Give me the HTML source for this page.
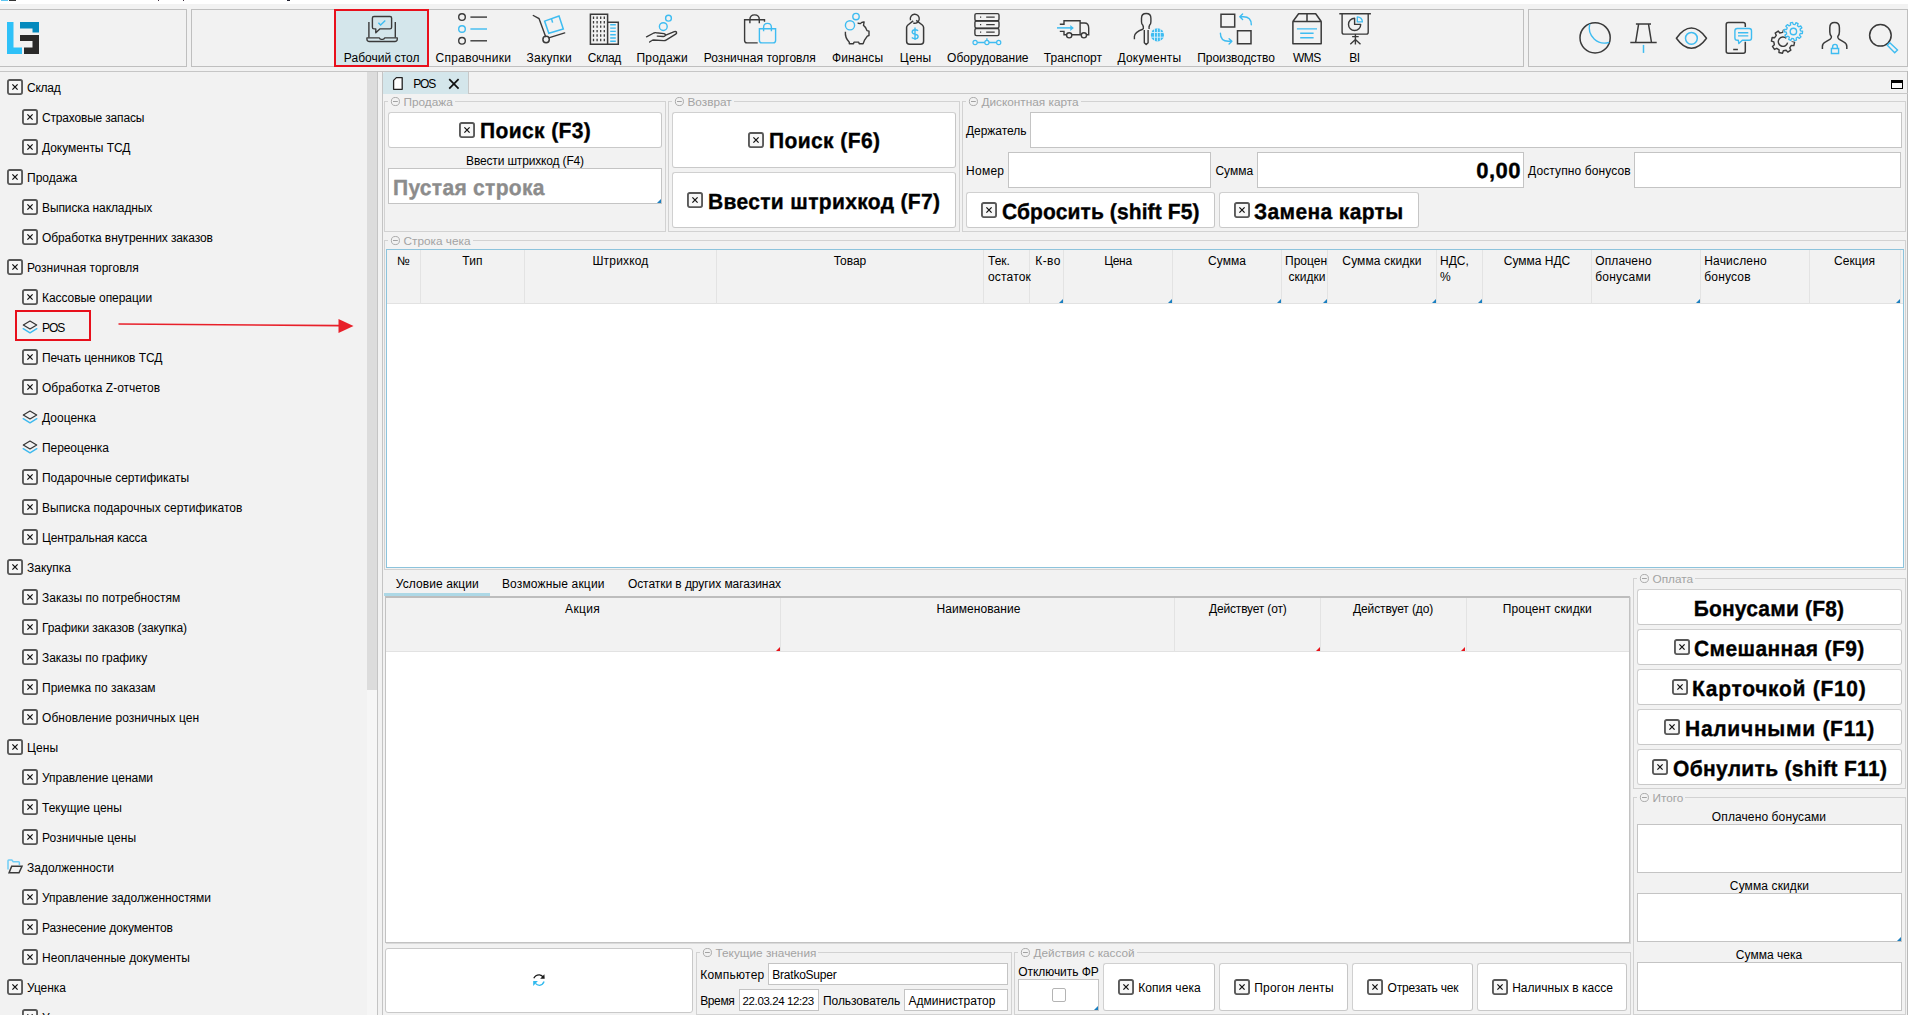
<!DOCTYPE html>
<html><head><meta charset="utf-8">
<style>
*{box-sizing:border-box;margin:0;padding:0}
html,body{width:1908px;height:1015px;overflow:hidden;background:#f2f2f2;font-family:"Liberation Sans",sans-serif;font-size:12px;color:#000}
.a{position:absolute}
.t{position:absolute;white-space:nowrap;line-height:14px;height:14px}
.c{text-align:center}
.pn{position:absolute;border:1px solid #bfbfbf}
.hl{position:absolute;height:1px;background:#c6c6c6}
.vl{position:absolute;width:1px;background:#c6c6c6}
.fs{position:absolute;border:1px solid #d2d2d2}
.lg{position:absolute;white-space:nowrap;color:#a3a3a3;background:#f2f2f2;line-height:14px;height:14px;font-size:11.800px;padding-right:2px}
.btn{position:absolute;background:#fff;border:1px solid #d0d0d0;border-right-color:#c6c6c6;border-bottom-color:#c9c9c9;border-radius:3px}
.inp{position:absolute;background:#fff;border:1px solid #c4c4c4}
.big{position:absolute;white-space:nowrap;font-weight:700;font-size:21.6px;line-height:26px;height:26px}
.xb{position:absolute;width:16px;height:16px}
.tri{position:absolute;width:0;height:0;border-left:4px solid transparent;border-bottom:4px solid #1a7fc0}
.trr{position:absolute;width:0;height:0;border-left:4px solid transparent;border-bottom:4px solid #e8141c}
.ti{position:absolute;left:0;width:366px;height:30px}
.ti span{position:absolute;top:8px;line-height:14px;white-space:nowrap}
.tl{position:absolute;top:9px;white-space:nowrap;line-height:14px;width:200px;margin-left:-100px;text-align:center}
#root{position:absolute;left:0;top:0;width:1908px;height:1015px;overflow:hidden}
</style></head><body><div id="root">
<!-- top strip -->
<div class="a" style="left:0;top:0;width:1908px;height:4px;background:#fff"></div>
<div class="a" style="left:1px;top:0;width:7px;height:1px;background:#5cc6f2"></div>
<div class="a" style="left:9px;top:0;width:7px;height:1px;background:#333"></div>
<div class="a" style="left:158px;top:0;width:1px;height:1px;background:#403040"></div><div class="a" style="left:183px;top:0;width:1px;height:1px;background:#403040"></div><div class="a" style="left:287px;top:0;width:3px;height:1px;background:#202030"></div>
<!-- header panels -->
<div class="pn" style="left:-1px;top:9px;width:188px;height:58px"></div>
<div class="pn" style="left:191px;top:9px;width:1333px;height:58px"></div>
<div class="pn" style="left:1528px;top:9px;width:380px;height:58px"></div>
<div class="hl" style="left:0;top:71px;width:1908px"></div>
<!-- LOGO -->
<svg class="a" style="left:7px;top:22px" width="32" height="32" viewBox="0 0 32 32"><path d="M0 0h6.5v25.5H15V32H0z" fill="#2fc1f8"/><path d="M13 0h19v10.5h-6.5V6.5H13z" fill="#0489bd"/><path d="M13 13h19v19H17v-6.5h8.500V19H13z" fill="#2b2a29"/></svg>
<!-- TOOLBAR -->
<div class="a" style="left:334px;top:9px;width:95px;height:58px;background:#d4e6eb;border:2px solid #e8101c"></div>
<div class="t c" style="left:301.7px;top:51px;width:160px;letter-spacing:0.03px">Рабочий стол</div>
<div class="t c" style="left:393.4px;top:51px;width:160px;letter-spacing:0.27px">Справочники</div>
<div class="t c" style="left:469.3px;top:51px;width:160px;letter-spacing:0.24px">Закупки</div>
<div class="t c" style="left:524.4px;top:51px;width:160px;letter-spacing:-0.33px">Склад</div>
<div class="t c" style="left:582.2px;top:51px;width:160px;letter-spacing:0.18px">Продажи</div>
<div class="t c" style="left:679.8px;top:51px;width:160px;letter-spacing:0.04px">Розничная торговля</div>
<div class="t c" style="left:777.6px;top:51px;width:160px;letter-spacing:0.12px">Финансы</div>
<div class="t c" style="left:835.6px;top:51px;width:160px;letter-spacing:0.17px">Цены</div>
<div class="t c" style="left:907.8px;top:51px;width:160px;letter-spacing:-0.02px">Оборудование</div>
<div class="t c" style="left:993.0px;top:51px;width:160px;letter-spacing:0.07px">Транспорт</div>
<div class="t c" style="left:1069.4px;top:51px;width:160px;letter-spacing:0.21px">Документы</div>
<div class="t c" style="left:1156.0px;top:51px;width:160px;letter-spacing:-0.06px">Производство</div>
<div class="t c" style="left:1226.9px;top:51px;width:160px;letter-spacing:-0.51px">WMS</div>
<div class="t c" style="left:1274.4px;top:51px;width:160px;letter-spacing:-0.6px">BI</div>
<svg class="a" style="left:0;top:0" width="1908" height="70" viewBox="0 0 1908 70"><path d="M368.9 22V37.500M395.300 22V37.500" fill="none" stroke="#3a3a3a" stroke-width="1.4" /><path d="M366.900 37.800H379.200q0.600 1.500 2 1.500h1.600q1.400 0 2-1.500H397.300V39q0 2.500-2.500 2.500H369.400q-2.500 0-2.500-2.500z" fill="none" stroke="#3a3a3a" stroke-width="1.3" stroke-linejoin="round"/><path d="M374 16.500H390q1.600 0 1.600 1.600V27.300q0 1.600-1.600 1.600H379.800L375.800 32.800V28.900H374q-1.600 0-1.600-1.600V18.100q0-1.600 1.600-1.600z" fill="none" stroke="#3a3a3a" stroke-width="1.4" stroke-linejoin="round"/><path d="M378.400 22.800 380.600 25 385.300 20.600" fill="none" stroke="#3ebcf1" stroke-width="1.4" /><circle cx="462" cy="17.1" r="3.300" fill="none" stroke="#3a3a3a" stroke-width="1.400"/><path d="M470.400 17.1H487" stroke="#3a3a3a" stroke-width="1.400"/><circle cx="462" cy="29" r="3.300" fill="none" stroke="#3ebcf1" stroke-width="1.400"/><path d="M470.400 29H487" stroke="#3ebcf1" stroke-width="1.400"/><circle cx="462" cy="40.8" r="3.300" fill="none" stroke="#3a3a3a" stroke-width="1.400"/><path d="M470.400 40.8H487" stroke="#3a3a3a" stroke-width="1.400"/><path d="M533.300 15.500 539 18.600 545.600 36.500M549.500 37.700 564.700 32.900" fill="none" stroke="#3a3a3a" stroke-width="1.4" stroke-linecap="round"/><circle cx="546.100" cy="39.500" r="3.200" fill="none" stroke="#3a3a3a" stroke-width="1.500"/><path d="M544.600 21.100 559 16 563.300 28.900 548.800 33.300zM551.500 18.600 552.600 22.600" fill="none" stroke="#3ebcf1" stroke-width="1.5" stroke-linejoin="miter"/><path d="M590.400 14.300H607.600V44.200H590.400zM607.600 22.300H618.300V44.200H607.600" fill="none" stroke="#3a3a3a" stroke-width="1.5" /><path d="M593.5 16.5v2.400M597.1 16.5v2.400M600.7 16.5v2.400M604.3 16.5v2.400M593.5 21.0v2.400M597.1 21.0v2.400M600.7 21.0v2.400M604.3 21.0v2.400M593.5 25.400000000000002v2.400M597.1 25.400000000000002v2.400M600.7 25.400000000000002v2.400M604.3 25.400000000000002v2.400M593.5 29.900000000000002v2.400M597.1 29.900000000000002v2.400M600.7 29.900000000000002v2.400M604.3 29.900000000000002v2.400M593.5 34.3v2.400M597.1 34.3v2.400M600.7 34.3v2.400M604.3 34.3v2.400M593.5 38.8v2.400M597.1 38.8v2.400M600.7 38.8v2.400M604.3 38.8v2.400" fill="none" stroke="#3a3a3a" stroke-width="1.3" /><path d="M610.200 24.8H615.800M610.200 28.1H615.800M610.200 31.4H615.800M610.200 34.7H615.800M610.200 38H615.800M610.200 41.3H615.800" fill="none" stroke="#3ebcf1" stroke-width="1.4" /><circle cx="668.500" cy="18.200" r="2.900" fill="none" stroke="#3ebcf1" stroke-width="1.400"/><circle cx="663.300" cy="26.600" r="3.900" fill="none" stroke="#3ebcf1" stroke-width="1.400"/><path d="M646.500 36.800 653.800 33q1.200-0.500 2.500-0.300l7.500 0.900q1.800 0.400 1.500 1.700-0.300 1.200-2 1.200l-6-0.400M665.800 35.200 674.300 31.600q1.600-0.500 2.200 0.600 0.500 1-0.800 2l-9.700 5.900q-1 0.600-2.200 0.500l-10.300-0.600q-0.900 0-1.600 0.500l-2.300 1.500" fill="none" stroke="#3a3a3a" stroke-width="1.4" stroke-linecap="round" stroke-linejoin="round"/><path d="M764.500 21.700V19.700H744.600V40.500q0 2.400 2.400 2.400H757.700" fill="none" stroke="#3a3a3a" stroke-width="1.4" /><path d="M749.900 23.200V19.700q0-4.800 4.700-4.800 4.700 0 4.700 4.800V23.200" fill="none" stroke="#3a3a3a" stroke-width="1.4" /><path d="M759.400 28.700H775.600V40.500q0 2.400-2.400 2.400H761.800q-2.400 0-2.400-2.400z" fill="none" stroke="#3ebcf1" stroke-width="1.4" /><path d="M763.600 31.200V27.400q0-4 3.900-4 3.900 0 3.900 4V31.200" fill="none" stroke="#3ebcf1" stroke-width="1.4" /><circle cx="856" cy="16.600" r="3.200" fill="none" stroke="#3ebcf1" stroke-width="1.400"/><circle cx="850" cy="25.300" r="4.600" fill="none" stroke="#3ebcf1" stroke-width="1.400"/><path d="M845.400 31.800q-0.600 6 3.900 10.500v1.400h4.200l0.500-1.600h4.700l0.500 1.600h3.900l1.300-3.300 2.900-4.300 1.700-0.600v-4.300l-2-0.600q-1.200-3.600-3.500-5.200l0.600-3.400q-2.200-0.200-3.800 1.600-1.400-0.400-2.700-0.300" fill="none" stroke="#3a3a3a" stroke-width="1.4" stroke-linejoin="round"/><path d="M910.500 20.200A4.500 4.500 0 1 1 913.300 23" fill="none" stroke="#3a3a3a" stroke-width="1.4" /><path d="M916.200 20.300 922.300 25q1.300 1 1.300 2.600V41.200q0 3-3 3H909.600q-3 0-3-3V27.600q0-1.600 1.300-2.600l5.300-4.100" fill="none" stroke="#3a3a3a" stroke-width="1.5" stroke-linejoin="round"/><path d="M918.100 30.700q-1.200-1-3-1-2.900 0-2.900 2.200 0 1.700 2.800 2.200 3.100 0.500 3.100 2.400 0 2.300-3 2.300-2 0-3.300-1.200M915 27.600V40" fill="none" stroke="#3ebcf1" stroke-width="1.4" /><rect x="974.900" y="13.6" width="24.100" height="7.100" rx="1.500" fill="none" stroke="#3a3a3a" stroke-width="1.400"/><path d="M980 17.2h1.200M986.200 17.2H994.700" stroke="#3a3a3a" stroke-width="1.300"/><rect x="974.900" y="21" width="24.100" height="7.100" rx="1.500" fill="none" stroke="#3a3a3a" stroke-width="1.400"/><path d="M980 24.6h1.200M986.200 24.6H994.700" stroke="#3a3a3a" stroke-width="1.300"/><rect x="974.900" y="28.5" width="24.100" height="7.100" rx="1.500" fill="none" stroke="#3a3a3a" stroke-width="1.400"/><path d="M980 32.1h1.200M986.200 32.1H994.700" stroke="#3a3a3a" stroke-width="1.300"/><circle cx="975.1" cy="42.500" r="2.100" fill="none" stroke="#3ebcf1" stroke-width="1.200"/><circle cx="986.9" cy="42.500" r="2.100" fill="none" stroke="#3ebcf1" stroke-width="1.200"/><circle cx="998.7" cy="42.500" r="2.100" fill="none" stroke="#3ebcf1" stroke-width="1.200"/><path d="M977.200 42.500H984.800M989 42.500H996.600M986.900 38.300V40.400" fill="none" stroke="#3ebcf1" stroke-width="1.3" /><path d="M1059.800 24.300H1064V20.700H1080.100V34.700M1059.800 31.400H1064V34.700H1066.400M1072 34.700H1081.100M1080.100 23H1084.500q4.200 0 4.200 5V34.700H1086.700" fill="none" stroke="#3a3a3a" stroke-width="1.4" /><circle cx="1069.200" cy="35.300" r="2.600" fill="#f2f2f2" stroke="#3a3a3a" stroke-width="1.400"/><circle cx="1083.900" cy="35.300" r="2.600" fill="#f2f2f2" stroke="#3a3a3a" stroke-width="1.400"/><path d="M1057 27.900H1072.500" fill="none" stroke="#3ebcf1" stroke-width="1.5" /><path d="M1070.300 24.900 1073.800 27.900 1070.300 30.900z" fill="#3ebcf1"/><path d="M1143.300 29q0.400-2.500-0.600-4-1.200-1-1.200-3.300v-3.500q0-4.700 4.700-4.700 4.700 0 4.700 4.700v3.500q0 2.300-1.200 3.300-1 1.500-0.600 4M1143.300 29q-8.900 3.300-8.900 7.500V39.200M1144.300 30V42.800L1146.200 44.600 1148.100 42.800V30" fill="none" stroke="#3a3a3a" stroke-width="1.4" stroke-linejoin="round"/><circle cx="1157.400" cy="34.900" r="6.600" fill="#3ebcf1"/><path d="M1151 32.500H1164M1151 37.200H1164M1154.500 29V41M1157.400 28.300V41.500M1160.300 29V41" stroke="#d9f1fb" stroke-width="0.900" fill="none"/><path d="M1221 14.200H1234.700V27H1221zM1237.500 30.700H1251V43.700H1237.500z" fill="none" stroke="#3a3a3a" stroke-width="1.5" /><path d="M1251.300 24.800q0-8-7.900-8H1240M1242.600 14 1239.800 16.800 1242.600 19.500" fill="none" stroke="#3ebcf1" stroke-width="1.4" stroke-linecap="round" stroke-linejoin="round"/><path d="M1220.400 33.300q0 8 7.900 8H1231.700M1229.100 38.700 1231.900 41.300 1229.100 44" fill="none" stroke="#3ebcf1" stroke-width="1.4" stroke-linecap="round" stroke-linejoin="round"/><path d="M1292.900 21.500H1321.200V43.700H1292.900zM1292.900 21.500 1298.600 13.700H1315.700L1321.200 21.500M1307 13.700V21.500" fill="none" stroke="#3a3a3a" stroke-width="1.5" stroke-linejoin="round"/><path d="M1296.900 28.900H1317M1300.200 33.300H1313.600M1300.200 37.800H1313.600" fill="none" stroke="#3ebcf1" stroke-width="1.4" /><path d="M1339.300 13.800H1370.900M1342.100 13.800V32.200q0 1.900 1.900 1.900H1366.300q1.900 0 1.900-1.900V13.800M1355.400 34.100V44.400M1352.100 36.600H1358.700M1355.400 39.600 1350.300 44.200M1355.400 39.600 1360.500 44.200" fill="none" stroke="#3a3a3a" stroke-width="1.4" /><path d="M1354.600 18.300a6.100 6.100 0 1 0 6.100 6.100H1354.600z" fill="none" stroke="#3a3a3a" stroke-width="1.4" stroke-linejoin="round"/><path d="M1357.300 16.800a5.100 5.100 0 0 1 5.100 5.100H1357.300z" fill="none" stroke="#3ebcf1" stroke-width="1.3" stroke-linejoin="round"/></svg>
<!-- RIGHTICONS -->
<svg class="a" style="left:0;top:0" width="1908" height="70" viewBox="0 0 1908 70"><circle cx="1595.100" cy="37.800" r="15.100" fill="none" stroke="#3a3a3a" stroke-width="1.500"/><path d="M1589.700 24.200A15.300 15.300 0 0 0 1609.200 42.300" fill="none" stroke="#3ebcf1" stroke-width="1.4" /><path d="M1635.900 24.100H1651M1638.600 24.100 1635.600 42.500M1648.500 24.100 1651.500 42.500M1630.300 42.600H1656.700" fill="none" stroke="#3a3a3a" stroke-width="1.5" /><path d="M1643.500 44.900V52.900" fill="none" stroke="#3ebcf1" stroke-width="1.5" /><path d="M1676.400 38.300Q1683.500 28.100 1691.400 28.100 1699.300 28.100 1706.500 38.300 1699.300 48.300 1691.400 48.300 1683.500 48.300 1676.400 38.300z" fill="none" stroke="#3a3a3a" stroke-width="1.5" stroke-linejoin="round"/><circle cx="1691.400" cy="38.300" r="5.900" fill="none" stroke="#3ebcf1" stroke-width="1.500"/><path d="M1745.300 27V24.500q0-2-2-2H1728.200q-2 0-2 2V51.300q0 2 2 2H1743.300q2 0 2-2V41.700M1733.200 49.400H1737.900" fill="none" stroke="#3a3a3a" stroke-width="1.5" /><path d="M1737.200 28.500H1749.200q2.300 0 2.300 2.300V37.900q0 2.300-2.300 2.300H1742.300L1738.800 43.500 1738.300 40.200H1737.200q-2.300 0-2.300-2.300V30.800q0-2.300 2.300-2.300zM1738 32.700H1748.300M1738 35.900H1748.300" fill="none" stroke="#3ebcf1" stroke-width="1.4" stroke-linejoin="round"/><path d="M1792.19 41.27 L1794.59 42.10 L1793.87 45.65 L1791.34 45.48 L1789.73 47.87 L1790.84 50.15 L1787.82 52.15 L1786.15 50.24 L1783.33 50.79 L1782.50 53.19 L1778.95 52.47 L1779.12 49.94 L1776.73 48.33 L1774.45 49.44 L1772.45 46.42 L1774.36 44.75 L1773.81 41.93 L1771.41 41.10 L1772.13 37.55 L1774.66 37.72 L1776.27 35.33 L1775.16 33.05 L1778.18 31.05 L1779.85 32.96 L1782.67 32.41 L1783.50 30.01 L1787.05 30.73 L1786.88 33.26 L1789.27 34.87 L1791.55 33.76 L1793.55 36.78 L1791.64 38.45z" fill="none" stroke="#3a3a3a" stroke-width="1.4" stroke-linejoin="round"/><circle cx="1793.600" cy="31.400" r="10.200" fill="#f2f2f2"/><path d="M1786.300 38.300A4.700 4.700 0 1 0 1787.600 42.600" fill="none" stroke="#3a3a3a" stroke-width="1.4" /><path d="M1800.47 30.87 L1802.60 31.26 L1802.37 33.56 L1800.21 33.52 L1799.49 35.15 L1800.98 36.71 L1799.44 38.44 L1797.72 37.14 L1796.18 38.03 L1796.47 40.17 L1794.21 40.66 L1793.58 38.60 L1791.81 38.42 L1790.78 40.32 L1788.67 39.39 L1789.38 37.35 L1788.05 36.16 L1786.10 37.10 L1784.94 35.11 L1786.71 33.87 L1786.33 32.13 L1784.20 31.74 L1784.43 29.44 L1786.59 29.48 L1787.31 27.85 L1785.82 26.29 L1787.36 24.56 L1789.08 25.86 L1790.62 24.97 L1790.33 22.83 L1792.59 22.34 L1793.22 24.40 L1794.99 24.58 L1796.02 22.68 L1798.13 23.61 L1797.42 25.65 L1798.75 26.84 L1800.70 25.90 L1801.86 27.89 L1800.09 29.13z" fill="none" stroke="#3ebcf1" stroke-width="1.3" stroke-linejoin="round"/><circle cx="1793.400" cy="31.500" r="3.200" fill="none" stroke="#3ebcf1" stroke-width="1.400"/><path d="M1822.400 48.900V46.200q0-2.700 3.200-4.300l4.700-2.700q1.300-0.700 1.100-2.800-1.600-1.700-1.600-4.500v-4.200q0-5.100 4.800-5.100 4.800 0 4.800 5.100v4.200q0 2.800-1.600 4.500-0.200 2.100 1.100 2.800l4.700 2.700q3.200 1.600 3.200 4.300V48.900" fill="none" stroke="#3a3a3a" stroke-width="1.5" stroke-linejoin="round"/><path d="M1831.400 48.500H1838.600V53.500H1831.400zM1832.600 48.500V47q0-2.600 2.400-2.600 2.400 0 2.400 2.600V48.500" fill="none" stroke="#3ebcf1" stroke-width="1.4" /><circle cx="1880.400" cy="35.300" r="10.800" fill="none" stroke="#3a3a3a" stroke-width="1.500"/><path d="M1887.300 45.300 1889.800 42.800 1897.500 50 1894.700 52.800z" fill="none" stroke="#3ebcf1" stroke-width="1.4" /></svg>
<!-- TREE -->
<svg class="xb" viewBox="0 0 16 16" style="left:7px;top:79px"><rect x="0.950" y="0.950" width="14.100" height="14.100" rx="1.700" fill="#f7f7f7" stroke="#575757" stroke-width="1.850"/><path d="M5.400 5.400l5.200 5.200M10.600 5.400l-5.200 5.200" stroke="#111" stroke-width="1.250" fill="none"/></svg>
<div class="t" style="left:27px;top:81px;letter-spacing:-0.23px">Склад</div>
<svg class="xb" viewBox="0 0 16 16" style="left:22px;top:109px"><rect x="0.950" y="0.950" width="14.100" height="14.100" rx="1.700" fill="#f7f7f7" stroke="#575757" stroke-width="1.850"/><path d="M5.400 5.400l5.200 5.200M10.600 5.400l-5.200 5.200" stroke="#111" stroke-width="1.250" fill="none"/></svg>
<div class="t" style="left:42px;top:111px;letter-spacing:-0.18px">Страховые запасы</div>
<svg class="xb" viewBox="0 0 16 16" style="left:22px;top:139px"><rect x="0.950" y="0.950" width="14.100" height="14.100" rx="1.700" fill="#f7f7f7" stroke="#575757" stroke-width="1.850"/><path d="M5.400 5.400l5.200 5.200M10.600 5.400l-5.200 5.200" stroke="#111" stroke-width="1.250" fill="none"/></svg>
<div class="t" style="left:42px;top:141px;letter-spacing:-0.05px">Документы ТСД</div>
<svg class="xb" viewBox="0 0 16 16" style="left:7px;top:169px"><rect x="0.950" y="0.950" width="14.100" height="14.100" rx="1.700" fill="#f7f7f7" stroke="#575757" stroke-width="1.850"/><path d="M5.400 5.400l5.200 5.200M10.600 5.400l-5.200 5.200" stroke="#111" stroke-width="1.250" fill="none"/></svg>
<div class="t" style="left:27px;top:171px">Продажа</div>
<svg class="xb" viewBox="0 0 16 16" style="left:22px;top:199px"><rect x="0.950" y="0.950" width="14.100" height="14.100" rx="1.700" fill="#f7f7f7" stroke="#575757" stroke-width="1.850"/><path d="M5.400 5.400l5.200 5.200M10.600 5.400l-5.200 5.200" stroke="#111" stroke-width="1.250" fill="none"/></svg>
<div class="t" style="left:42px;top:201px;letter-spacing:-0.1px">Выписка накладных</div>
<svg class="xb" viewBox="0 0 16 16" style="left:22px;top:229px"><rect x="0.950" y="0.950" width="14.100" height="14.100" rx="1.700" fill="#f7f7f7" stroke="#575757" stroke-width="1.850"/><path d="M5.400 5.400l5.200 5.200M10.600 5.400l-5.200 5.200" stroke="#111" stroke-width="1.250" fill="none"/></svg>
<div class="t" style="left:42px;top:231px;letter-spacing:-0.1px">Обработка внутренних заказов</div>
<svg class="xb" viewBox="0 0 16 16" style="left:7px;top:259px"><rect x="0.950" y="0.950" width="14.100" height="14.100" rx="1.700" fill="#f7f7f7" stroke="#575757" stroke-width="1.850"/><path d="M5.400 5.400l5.200 5.200M10.600 5.400l-5.200 5.200" stroke="#111" stroke-width="1.250" fill="none"/></svg>
<div class="t" style="left:27px;top:261px;letter-spacing:0.03px">Розничная торговля</div>
<svg class="xb" viewBox="0 0 16 16" style="left:22px;top:289px"><rect x="0.950" y="0.950" width="14.100" height="14.100" rx="1.700" fill="#f7f7f7" stroke="#575757" stroke-width="1.850"/><path d="M5.400 5.400l5.200 5.200M10.600 5.400l-5.200 5.200" stroke="#111" stroke-width="1.250" fill="none"/></svg>
<div class="t" style="left:42px;top:291px;letter-spacing:-0.05px">Кассовые операции</div>
<svg class="a" style="left:22px;top:320px" width="16" height="15" viewBox="0 0 16 15"><path d="M1.300 5 8 1 14.700 5 8 9z" fill="none" stroke="#333" stroke-width="1.200" stroke-linejoin="round"/><path d="M1.200 8.700 8 12.900 14.800 8.700" fill="none" stroke="#3db9ee" stroke-width="1.400" stroke-linecap="round" stroke-linejoin="round"/></svg>
<div class="t" style="left:42px;top:321px;letter-spacing:-1.0px">POS</div>
<svg class="xb" viewBox="0 0 16 16" style="left:22px;top:349px"><rect x="0.950" y="0.950" width="14.100" height="14.100" rx="1.700" fill="#f7f7f7" stroke="#575757" stroke-width="1.850"/><path d="M5.400 5.400l5.200 5.200M10.600 5.400l-5.200 5.200" stroke="#111" stroke-width="1.250" fill="none"/></svg>
<div class="t" style="left:42px;top:351px;letter-spacing:-0.07px">Печать ценников ТСД</div>
<svg class="xb" viewBox="0 0 16 16" style="left:22px;top:379px"><rect x="0.950" y="0.950" width="14.100" height="14.100" rx="1.700" fill="#f7f7f7" stroke="#575757" stroke-width="1.850"/><path d="M5.400 5.400l5.200 5.200M10.600 5.400l-5.200 5.200" stroke="#111" stroke-width="1.250" fill="none"/></svg>
<div class="t" style="left:42px;top:381px">Обработка Z-отчетов</div>
<svg class="a" style="left:22px;top:410px" width="16" height="15" viewBox="0 0 16 15"><path d="M1.300 5 8 1 14.700 5 8 9z" fill="none" stroke="#333" stroke-width="1.200" stroke-linejoin="round"/><path d="M1.200 8.700 8 12.900 14.800 8.700" fill="none" stroke="#3db9ee" stroke-width="1.400" stroke-linecap="round" stroke-linejoin="round"/></svg>
<div class="t" style="left:42px;top:411px;letter-spacing:0.01px">Дооценка</div>
<svg class="a" style="left:22px;top:440px" width="16" height="15" viewBox="0 0 16 15"><path d="M1.300 5 8 1 14.700 5 8 9z" fill="none" stroke="#333" stroke-width="1.200" stroke-linejoin="round"/><path d="M1.200 8.700 8 12.900 14.800 8.700" fill="none" stroke="#3db9ee" stroke-width="1.400" stroke-linecap="round" stroke-linejoin="round"/></svg>
<div class="t" style="left:42px;top:441px;letter-spacing:-0.07px">Переоценка</div>
<svg class="xb" viewBox="0 0 16 16" style="left:22px;top:469px"><rect x="0.950" y="0.950" width="14.100" height="14.100" rx="1.700" fill="#f7f7f7" stroke="#575757" stroke-width="1.850"/><path d="M5.400 5.400l5.200 5.200M10.600 5.400l-5.200 5.200" stroke="#111" stroke-width="1.250" fill="none"/></svg>
<div class="t" style="left:42px;top:471px;letter-spacing:-0.01px">Подарочные сертификаты</div>
<svg class="xb" viewBox="0 0 16 16" style="left:22px;top:499px"><rect x="0.950" y="0.950" width="14.100" height="14.100" rx="1.700" fill="#f7f7f7" stroke="#575757" stroke-width="1.850"/><path d="M5.400 5.400l5.200 5.200M10.600 5.400l-5.200 5.200" stroke="#111" stroke-width="1.250" fill="none"/></svg>
<div class="t" style="left:42px;top:501px;letter-spacing:0.01px">Выписка подарочных сертификатов</div>
<svg class="xb" viewBox="0 0 16 16" style="left:22px;top:529px"><rect x="0.950" y="0.950" width="14.100" height="14.100" rx="1.700" fill="#f7f7f7" stroke="#575757" stroke-width="1.850"/><path d="M5.400 5.400l5.200 5.200M10.600 5.400l-5.200 5.200" stroke="#111" stroke-width="1.250" fill="none"/></svg>
<div class="t" style="left:42px;top:531px;letter-spacing:-0.2px">Центральная касса</div>
<svg class="xb" viewBox="0 0 16 16" style="left:7px;top:559px"><rect x="0.950" y="0.950" width="14.100" height="14.100" rx="1.700" fill="#f7f7f7" stroke="#575757" stroke-width="1.850"/><path d="M5.400 5.400l5.200 5.200M10.600 5.400l-5.200 5.200" stroke="#111" stroke-width="1.250" fill="none"/></svg>
<div class="t" style="left:27px;top:561px;letter-spacing:-0.02px">Закупка</div>
<svg class="xb" viewBox="0 0 16 16" style="left:22px;top:589px"><rect x="0.950" y="0.950" width="14.100" height="14.100" rx="1.700" fill="#f7f7f7" stroke="#575757" stroke-width="1.850"/><path d="M5.400 5.400l5.200 5.200M10.600 5.400l-5.200 5.200" stroke="#111" stroke-width="1.250" fill="none"/></svg>
<div class="t" style="left:42px;top:591px;letter-spacing:0.01px">Заказы по потребностям</div>
<svg class="xb" viewBox="0 0 16 16" style="left:22px;top:619px"><rect x="0.950" y="0.950" width="14.100" height="14.100" rx="1.700" fill="#f7f7f7" stroke="#575757" stroke-width="1.850"/><path d="M5.400 5.400l5.200 5.200M10.600 5.400l-5.200 5.200" stroke="#111" stroke-width="1.250" fill="none"/></svg>
<div class="t" style="left:42px;top:621px;letter-spacing:-0.09px">Графики заказов (закупка)</div>
<svg class="xb" viewBox="0 0 16 16" style="left:22px;top:649px"><rect x="0.950" y="0.950" width="14.100" height="14.100" rx="1.700" fill="#f7f7f7" stroke="#575757" stroke-width="1.850"/><path d="M5.400 5.400l5.200 5.200M10.600 5.400l-5.200 5.200" stroke="#111" stroke-width="1.250" fill="none"/></svg>
<div class="t" style="left:42px;top:651px;letter-spacing:-0.03px">Заказы по графику</div>
<svg class="xb" viewBox="0 0 16 16" style="left:22px;top:679px"><rect x="0.950" y="0.950" width="14.100" height="14.100" rx="1.700" fill="#f7f7f7" stroke="#575757" stroke-width="1.850"/><path d="M5.400 5.400l5.200 5.200M10.600 5.400l-5.200 5.200" stroke="#111" stroke-width="1.250" fill="none"/></svg>
<div class="t" style="left:42px;top:681px">Приемка по заказам</div>
<svg class="xb" viewBox="0 0 16 16" style="left:22px;top:709px"><rect x="0.950" y="0.950" width="14.100" height="14.100" rx="1.700" fill="#f7f7f7" stroke="#575757" stroke-width="1.850"/><path d="M5.400 5.400l5.200 5.200M10.600 5.400l-5.200 5.200" stroke="#111" stroke-width="1.250" fill="none"/></svg>
<div class="t" style="left:42px;top:711px;letter-spacing:0.07px">Обновление розничных цен</div>
<svg class="xb" viewBox="0 0 16 16" style="left:7px;top:739px"><rect x="0.950" y="0.950" width="14.100" height="14.100" rx="1.700" fill="#f7f7f7" stroke="#575757" stroke-width="1.850"/><path d="M5.400 5.400l5.200 5.200M10.600 5.400l-5.200 5.200" stroke="#111" stroke-width="1.250" fill="none"/></svg>
<div class="t" style="left:27px;top:741px;letter-spacing:0.13px">Цены</div>
<svg class="xb" viewBox="0 0 16 16" style="left:22px;top:769px"><rect x="0.950" y="0.950" width="14.100" height="14.100" rx="1.700" fill="#f7f7f7" stroke="#575757" stroke-width="1.850"/><path d="M5.400 5.400l5.200 5.200M10.600 5.400l-5.200 5.200" stroke="#111" stroke-width="1.250" fill="none"/></svg>
<div class="t" style="left:42px;top:771px;letter-spacing:-0.04px">Управление ценами</div>
<svg class="xb" viewBox="0 0 16 16" style="left:22px;top:799px"><rect x="0.950" y="0.950" width="14.100" height="14.100" rx="1.700" fill="#f7f7f7" stroke="#575757" stroke-width="1.850"/><path d="M5.400 5.400l5.200 5.200M10.600 5.400l-5.200 5.200" stroke="#111" stroke-width="1.250" fill="none"/></svg>
<div class="t" style="left:42px;top:801px;letter-spacing:-0.01px">Текущие цены</div>
<svg class="xb" viewBox="0 0 16 16" style="left:22px;top:829px"><rect x="0.950" y="0.950" width="14.100" height="14.100" rx="1.700" fill="#f7f7f7" stroke="#575757" stroke-width="1.850"/><path d="M5.400 5.400l5.200 5.200M10.600 5.400l-5.200 5.200" stroke="#111" stroke-width="1.250" fill="none"/></svg>
<div class="t" style="left:42px;top:831px;letter-spacing:0.08px">Розничные цены</div>
<svg class="a" style="left:7px;top:859px" width="17" height="16" viewBox="0 0 17 16"><path d="M1 10.500V1.800Q1 1 1.800 1H4.800L6.200 2.800H11.600Q12.400 2.800 12.400 3.600V6" fill="none" stroke="#6fcdf6" stroke-width="1.500"/><path d="M4.700 7.300H15L12 13.700H2.100z" fill="none" stroke="#3a3a3a" stroke-width="1.500" stroke-linejoin="miter"/></svg>
<div class="t" style="left:27px;top:861px;letter-spacing:-0.01px">Задолженности</div>
<svg class="xb" viewBox="0 0 16 16" style="left:22px;top:889px"><rect x="0.950" y="0.950" width="14.100" height="14.100" rx="1.700" fill="#f7f7f7" stroke="#575757" stroke-width="1.850"/><path d="M5.400 5.400l5.200 5.200M10.600 5.400l-5.200 5.200" stroke="#111" stroke-width="1.250" fill="none"/></svg>
<div class="t" style="left:42px;top:891px;letter-spacing:-0.05px">Управление задолженностями</div>
<svg class="xb" viewBox="0 0 16 16" style="left:22px;top:919px"><rect x="0.950" y="0.950" width="14.100" height="14.100" rx="1.700" fill="#f7f7f7" stroke="#575757" stroke-width="1.850"/><path d="M5.400 5.400l5.200 5.200M10.600 5.400l-5.200 5.200" stroke="#111" stroke-width="1.250" fill="none"/></svg>
<div class="t" style="left:42px;top:921px;letter-spacing:-0.15px">Разнесение документов</div>
<svg class="xb" viewBox="0 0 16 16" style="left:22px;top:949px"><rect x="0.950" y="0.950" width="14.100" height="14.100" rx="1.700" fill="#f7f7f7" stroke="#575757" stroke-width="1.850"/><path d="M5.400 5.400l5.200 5.200M10.600 5.400l-5.200 5.200" stroke="#111" stroke-width="1.250" fill="none"/></svg>
<div class="t" style="left:42px;top:951px;letter-spacing:0.03px">Неоплаченные документы</div>
<svg class="xb" viewBox="0 0 16 16" style="left:7px;top:979px"><rect x="0.950" y="0.950" width="14.100" height="14.100" rx="1.700" fill="#f7f7f7" stroke="#575757" stroke-width="1.850"/><path d="M5.400 5.400l5.200 5.200M10.600 5.400l-5.200 5.200" stroke="#111" stroke-width="1.250" fill="none"/></svg>
<div class="t" style="left:27px;top:981px;letter-spacing:-0.1px">Уценка</div>
<svg class="xb" viewBox="0 0 16 16" style="left:22px;top:1009px"><rect x="0.950" y="0.950" width="14.100" height="14.100" rx="1.700" fill="#f7f7f7" stroke="#575757" stroke-width="1.850"/><path d="M5.400 5.400l5.200 5.200M10.600 5.400l-5.200 5.200" stroke="#111" stroke-width="1.250" fill="none"/></svg>
<div class="t" style="left:42px;top:1011px">Уценка</div>
<div class="a" style="left:15px;top:310px;width:76px;height:31px;border:2px solid #e8101c"></div>
<svg class="a" style="left:115px;top:316px" width="242" height="20" viewBox="0 0 242 20"><path d="M3.500 8 224 9.600" stroke="#e8202a" stroke-width="1.700" fill="none"/><path d="M223.500 3 238.500 10 223.500 17z" fill="#e8202a"/></svg>
<div class="a" style="left:367px;top:72px;width:10px;height:943px;background:#f6f6f6"></div>
<div class="a" style="left:367px;top:72px;width:10px;height:618px;background:#dcdcdc"></div>
<div class="vl" style="left:377px;top:71px;height:944px;background:#c4c4c4"></div>
<div class="vl" style="left:382px;top:71px;height:944px;background:#c4c4c4"></div>
<!-- MAIN -->
<div class="vl" style="left:1907px;top:71px;height:944px;background:#b9b9b9"></div>
<div class="a" style="left:383px;top:72px;width:85px;height:22px;background:#d4e6eb;border-top-left-radius:2px"></div>
<div class="vl" style="left:468px;top:72px;height:22px;background:#c8c8c8"></div>
<div class="hl" style="left:469px;top:93px;width:1439px;background:#c8c8c8"></div>
<svg class="a" style="left:392px;top:76px" width="12" height="15" viewBox="0 0 12 15"><path d="M1.600 4.400 4.400 1.600H10.200V13.300H1.600z" fill="#fff" stroke="#222" stroke-width="1.300" stroke-linejoin="round"/></svg>
<div class="t" style="top:77px;line-height:14px;height:14px;letter-spacing:-1.2px;left:413.3px;">POS</div>
<svg class="a" style="left:448px;top:78px" width="12" height="12" viewBox="0 0 12 12"><path d="M1.200 1.200 10.600 10.600M10.600 1.200 1.200 10.600" stroke="#111" stroke-width="1.700"/></svg>
<div class="a" style="left:1891px;top:80px;width:12px;height:9px;border:1px solid #000;border-top-width:3px;background:#f8f8f8"></div>
<div class="fs" style="left:384px;top:101px;width:282px;height:131px;"></div>
<div class="lg" style="left:388px;top:95px;padding-left:15.500px">Продажа</div>
<svg class="a" style="left:390px;top:97px" width="10" height="10" viewBox="0 0 10 10"><circle cx="5.400" cy="4.500" r="4.050" fill="none" stroke="#a3a3a3" stroke-width="0.900"/><path d="M3 4.500H7.800" stroke="#a3a3a3" stroke-width="1"/></svg>
<div class="btn" style="left:388px;top:112px;width:274px;height:36px;"></div>
<svg class="xb" viewBox="0 0 16 16" style="left:459px;top:122px"><rect x="0.950" y="0.950" width="14.100" height="14.100" rx="1.700" fill="#f7f7f7" stroke="#575757" stroke-width="1.850"/><path d="M5.400 5.400l5.200 5.200M10.600 5.400l-5.200 5.200" stroke="#111" stroke-width="1.250" fill="none"/></svg>
<div class="t" style="top:118px;line-height:26px;height:26px;font-size:21px;font-weight:700;letter-spacing:0.38px;transform:scaleY(1.04) rotate(0.03deg);transform-origin:0 20.3px;-webkit-text-stroke:0.350px #000;left:479.5px;">Поиск (F3)</div>
<div class="t" style="top:154px;line-height:14px;height:14px;letter-spacing:-0.16px;left:325.0px;width:400px;text-align:center;">Ввести штрихкод (F4)</div>
<div class="inp" style="left:388px;top:168px;width:274px;height:36px;"></div>
<div class="t" style="top:175px;line-height:26px;height:26px;font-size:21px;font-weight:700;color:#8c8c8c;letter-spacing:0.3px;transform:scaleY(1.04) rotate(0.03deg);transform-origin:0 20.3px;-webkit-text-stroke:0.350px #8c8c8c;left:393px;">Пустая строка</div>
<div class="tri" style="left:657px;top:199px"></div>
<div class="fs" style="left:668px;top:101px;width:292px;height:131px;"></div>
<div class="lg" style="left:672px;top:95px;padding-left:15.500px">Возврат</div>
<svg class="a" style="left:674px;top:97px" width="10" height="10" viewBox="0 0 10 10"><circle cx="5.400" cy="4.500" r="4.050" fill="none" stroke="#a3a3a3" stroke-width="0.900"/><path d="M3 4.500H7.800" stroke="#a3a3a3" stroke-width="1"/></svg>
<div class="btn" style="left:672px;top:112px;width:284px;height:56px;"></div>
<svg class="xb" viewBox="0 0 16 16" style="left:748px;top:132px"><rect x="0.950" y="0.950" width="14.100" height="14.100" rx="1.700" fill="#f7f7f7" stroke="#575757" stroke-width="1.850"/><path d="M5.400 5.400l5.200 5.200M10.600 5.400l-5.200 5.200" stroke="#111" stroke-width="1.250" fill="none"/></svg>
<div class="t" style="top:128px;line-height:26px;height:26px;font-size:21px;font-weight:700;letter-spacing:0.4px;transform:scaleY(1.04) rotate(0.03deg);transform-origin:0 20.3px;-webkit-text-stroke:0.350px #000;left:769px;">Поиск (F6)</div>
<div class="btn" style="left:672px;top:172px;width:284px;height:56px;"></div>
<svg class="xb" viewBox="0 0 16 16" style="left:687px;top:192px"><rect x="0.950" y="0.950" width="14.100" height="14.100" rx="1.700" fill="#f7f7f7" stroke="#575757" stroke-width="1.850"/><path d="M5.400 5.400l5.200 5.200M10.600 5.400l-5.200 5.200" stroke="#111" stroke-width="1.250" fill="none"/></svg>
<div class="t" style="top:189px;line-height:26px;height:26px;font-size:21px;font-weight:700;letter-spacing:0.34px;transform:scaleY(1.04) rotate(0.03deg);transform-origin:0 20.3px;-webkit-text-stroke:0.350px #000;left:707.8px;">Ввести штрихкод (F7)</div>
<div class="fs" style="left:962px;top:101px;width:944px;height:131px;"></div>
<div class="lg" style="left:966px;top:95px;padding-left:15.500px">Дисконтная карта</div>
<svg class="a" style="left:968px;top:97px" width="10" height="10" viewBox="0 0 10 10"><circle cx="5.400" cy="4.500" r="4.050" fill="none" stroke="#a3a3a3" stroke-width="0.900"/><path d="M3 4.500H7.800" stroke="#a3a3a3" stroke-width="1"/></svg>
<div class="t" style="top:124px;line-height:14px;height:14px;letter-spacing:-0.05px;left:966px;">Держатель</div>
<div class="inp" style="left:1030px;top:112px;width:872px;height:36px;"></div>
<div class="t" style="top:164px;line-height:14px;height:14px;letter-spacing:0.27px;left:966px;">Номер</div>
<div class="inp" style="left:1008px;top:152px;width:203px;height:36px;"></div>
<div class="t" style="top:164px;line-height:14px;height:14px;letter-spacing:0.05px;left:1215.4px;">Сумма</div>
<div class="inp" style="left:1257px;top:152px;width:267px;height:36px;"></div>
<div class="t" style="top:158px;line-height:26px;height:26px;font-size:22px;font-weight:700;letter-spacing:0.5px;transform:scaleY(1.0) rotate(0.03deg);transform-origin:0 20.6px;-webkit-text-stroke:0.350px #000;left:1320.5px;width:200px;text-align:right;">0,00</div>
<div class="t" style="top:164px;line-height:14px;height:14px;letter-spacing:0.12px;left:1528px;">Доступно бонусов</div>
<div class="inp" style="left:1634px;top:152px;width:267px;height:36px;"></div>
<div class="btn" style="left:966px;top:192px;width:249px;height:36px;"></div>
<svg class="xb" viewBox="0 0 16 16" style="left:981px;top:202px"><rect x="0.950" y="0.950" width="14.100" height="14.100" rx="1.700" fill="#f7f7f7" stroke="#575757" stroke-width="1.850"/><path d="M5.400 5.400l5.200 5.200M10.600 5.400l-5.200 5.200" stroke="#111" stroke-width="1.250" fill="none"/></svg>
<div class="t" style="top:199px;line-height:26px;height:26px;font-size:21px;font-weight:700;letter-spacing:0.11px;transform:scaleY(1.04) rotate(0.03deg);transform-origin:0 20.3px;-webkit-text-stroke:0.350px #000;left:1001.5px;">Сбросить (shift F5)</div>
<div class="btn" style="left:1219px;top:192px;width:200px;height:36px;"></div>
<svg class="xb" viewBox="0 0 16 16" style="left:1234px;top:202px"><rect x="0.950" y="0.950" width="14.100" height="14.100" rx="1.700" fill="#f7f7f7" stroke="#575757" stroke-width="1.850"/><path d="M5.400 5.400l5.200 5.200M10.600 5.400l-5.200 5.200" stroke="#111" stroke-width="1.250" fill="none"/></svg>
<div class="t" style="top:199px;line-height:26px;height:26px;font-size:21px;font-weight:700;letter-spacing:0.36px;transform:scaleY(1.04) rotate(0.03deg);transform-origin:0 20.3px;-webkit-text-stroke:0.350px #000;left:1254.4px;">Замена карты</div>
<div class="fs" style="left:384px;top:240px;width:1522px;height:330px;"></div>
<div class="lg" style="left:388px;top:234px;padding-left:15.500px">Строка чека</div>
<svg class="a" style="left:390px;top:236px" width="10" height="10" viewBox="0 0 10 10"><circle cx="5.400" cy="4.500" r="4.050" fill="none" stroke="#a3a3a3" stroke-width="0.900"/><path d="M3 4.500H7.800" stroke="#a3a3a3" stroke-width="1"/></svg>
<div class="a" style="left:386px;top:249px;width:1518px;height:319px;background:#fff;border:1px solid #8cc3dc"></div>
<div class="a" style="left:387px;top:250px;width:1516px;height:54px;background:#f2f2f2;border-bottom:1px solid #e2e2e2"></div>
<div class="vl" style="left:420px;top:250px;height:54px;background:#e3e3e3"></div>
<div class="vl" style="left:524px;top:250px;height:54px;background:#e3e3e3"></div>
<div class="vl" style="left:716px;top:250px;height:54px;background:#e3e3e3"></div>
<div class="vl" style="left:983px;top:250px;height:54px;background:#e3e3e3"></div>
<div class="vl" style="left:1029px;top:250px;height:54px;background:#e3e3e3"></div>
<div class="vl" style="left:1063px;top:250px;height:54px;background:#e3e3e3"></div>
<div class="vl" style="left:1172px;top:250px;height:54px;background:#e3e3e3"></div>
<div class="vl" style="left:1281px;top:250px;height:54px;background:#e3e3e3"></div>
<div class="vl" style="left:1327px;top:250px;height:54px;background:#e3e3e3"></div>
<div class="vl" style="left:1436px;top:250px;height:54px;background:#e3e3e3"></div>
<div class="vl" style="left:1482px;top:250px;height:54px;background:#e3e3e3"></div>
<div class="vl" style="left:1591px;top:250px;height:54px;background:#e3e3e3"></div>
<div class="vl" style="left:1700px;top:250px;height:54px;background:#e3e3e3"></div>
<div class="vl" style="left:1809px;top:250px;height:54px;background:#e3e3e3"></div>
<div class="vl" style="left:1900px;top:250px;height:54px;background:#e3e3e3"></div>
<div class="t" style="top:254px;line-height:14px;height:14px;left:203.5px;width:400px;text-align:center;">№</div>
<div class="t" style="top:254px;line-height:14px;height:14px;letter-spacing:0.2px;left:272.5px;width:400px;text-align:center;">Тип</div>
<div class="t" style="top:254px;line-height:14px;height:14px;letter-spacing:0.18px;left:420.5px;width:400px;text-align:center;">Штрихкод</div>
<div class="t" style="top:254px;line-height:14px;height:14px;letter-spacing:-0.04px;left:650.0px;width:400px;text-align:center;">Товар</div>
<div class="t" style="top:254px;line-height:14px;height:14px;left:988px;">Тек.</div>
<div class="t" style="top:270px;line-height:14px;height:14px;letter-spacing:0.19px;left:988px;">остаток</div>
<div class="t" style="top:254px;line-height:14px;height:14px;letter-spacing:0.37px;left:1035.3px;">К-во</div>
<div class="t" style="top:254px;line-height:14px;height:14px;letter-spacing:-0.28px;left:918.0px;width:400px;text-align:center;">Цена</div>
<div class="t" style="top:254px;line-height:14px;height:14px;letter-spacing:0.05px;left:1027.0px;width:400px;text-align:center;">Сумма</div>
<div class="a" style="left:1282px;top:250px;width:45.500px;height:51px;overflow:hidden">
<div class="t" style="left:3px;top:4px">Процен</div><div class="t" style="left:6.600px;top:20px">скидки</div></div>
<div class="t" style="top:254px;line-height:14px;height:14px;letter-spacing:0.11px;left:1182.0px;width:400px;text-align:center;">Сумма скидки</div>
<div class="t" style="top:254px;line-height:14px;height:14px;left:1440px;">НДС,</div>
<div class="t" style="top:270px;line-height:14px;height:14px;left:1440px;">%</div>
<div class="t" style="top:254px;line-height:14px;height:14px;left:1337.0px;width:400px;text-align:center;">Сумма НДС</div>
<div class="t" style="top:254px;line-height:14px;height:14px;letter-spacing:0.13px;left:1595.2px;">Оплачено</div>
<div class="t" style="top:270px;line-height:14px;height:14px;letter-spacing:0.25px;left:1595.2px;">бонусами</div>
<div class="t" style="top:254px;line-height:14px;height:14px;letter-spacing:0.19px;left:1704.2px;">Начислено</div>
<div class="t" style="top:270px;line-height:14px;height:14px;letter-spacing:0.2px;left:1704.2px;">бонусов</div>
<div class="t" style="top:254px;line-height:14px;height:14px;letter-spacing:0.05px;left:1654.5px;width:400px;text-align:center;">Секция</div>
<div class="tri" style="left:1059px;top:299px"></div>
<div class="tri" style="left:1168px;top:299px"></div>
<div class="tri" style="left:1277px;top:299px"></div>
<div class="tri" style="left:1323px;top:299px"></div>
<div class="tri" style="left:1432px;top:299px"></div>
<div class="tri" style="left:1478px;top:299px"></div>
<div class="tri" style="left:1696px;top:299px"></div>
<div class="tri" style="left:1896px;top:299px"></div>
<div class="t" style="top:577px;line-height:14px;height:14px;letter-spacing:0.09px;left:395.8px;">Условие акции</div>
<div class="t" style="top:577px;line-height:14px;height:14px;letter-spacing:0.16px;left:501.9px;">Возможные акции</div>
<div class="t" style="top:577px;line-height:14px;height:14px;letter-spacing:-0.06px;left:627.9px;">Остатки в других магазинах</div>
<div class="a" style="left:384px;top:593px;width:106px;height:3px;background:#add8e6"></div>
<div class="a" style="left:385px;top:596px;width:1245px;height:347px;background:#fff;border:1px solid #c2c2c2;border-top:2px solid #bdbdbd;box-shadow:1px 1px 0 #dadada"></div>
<div class="a" style="left:386px;top:598px;width:1243px;height:54px;background:#f2f2f2;border-bottom:1px solid #e2e2e2"></div>
<div class="vl" style="left:780px;top:598px;height:54px;background:#e3e3e3"></div>
<div class="vl" style="left:1174px;top:598px;height:54px;background:#e3e3e3"></div>
<div class="vl" style="left:1320px;top:598px;height:54px;background:#e3e3e3"></div>
<div class="vl" style="left:1466px;top:598px;height:54px;background:#e3e3e3"></div>
<div class="t" style="top:602px;line-height:14px;height:14px;letter-spacing:0.34px;left:382.6px;width:400px;text-align:center;">Акция</div>
<div class="t" style="top:602px;line-height:14px;height:14px;letter-spacing:0.08px;left:778.5px;width:400px;text-align:center;">Наименование</div>
<div class="t" style="top:602px;line-height:14px;height:14px;letter-spacing:-0.18px;left:1047.8px;width:400px;text-align:center;">Действует (от)</div>
<div class="t" style="top:602px;line-height:14px;height:14px;letter-spacing:-0.11px;left:1193.1px;width:400px;text-align:center;">Действует (до)</div>
<div class="t" style="top:602px;line-height:14px;height:14px;letter-spacing:0.11px;left:1347.3px;width:400px;text-align:center;">Процент скидки</div>
<div class="trr" style="left:776px;top:647px"></div>
<div class="trr" style="left:1316px;top:647px"></div>
<div class="trr" style="left:1461px;top:647px"></div>
<div class="fs" style="left:1633px;top:578px;width:273px;height:211px;"></div>
<div class="lg" style="left:1637px;top:572px;padding-left:15.500px">Оплата</div>
<svg class="a" style="left:1639px;top:574px" width="10" height="10" viewBox="0 0 10 10"><circle cx="5.400" cy="4.500" r="4.050" fill="none" stroke="#a3a3a3" stroke-width="0.900"/><path d="M3 4.500H7.800" stroke="#a3a3a3" stroke-width="1"/></svg>
<div class="btn" style="left:1637px;top:589px;width:265px;height:36px;"></div>
<div class="btn" style="left:1637px;top:629px;width:265px;height:36px;"></div>
<div class="btn" style="left:1637px;top:669px;width:265px;height:36px;"></div>
<div class="btn" style="left:1637px;top:709px;width:265px;height:36px;"></div>
<div class="btn" style="left:1637px;top:749px;width:265px;height:36px;"></div>
<div class="t" style="top:596px;line-height:26px;height:26px;font-size:21px;font-weight:700;letter-spacing:0.19px;transform:scaleY(1.04) rotate(0.03deg);transform-origin:0 20.3px;-webkit-text-stroke:0.350px #000;left:1569.0px;width:400px;text-align:center;">Бонусами (F8)</div>
<svg class="xb" viewBox="0 0 16 16" style="left:1674px;top:639px"><rect x="0.950" y="0.950" width="14.100" height="14.100" rx="1.700" fill="#f7f7f7" stroke="#575757" stroke-width="1.850"/><path d="M5.400 5.400l5.200 5.200M10.600 5.400l-5.200 5.200" stroke="#111" stroke-width="1.250" fill="none"/></svg>
<div class="t" style="top:636px;line-height:26px;height:26px;font-size:21px;font-weight:700;letter-spacing:0.39px;transform:scaleY(1.04) rotate(0.03deg);transform-origin:0 20.3px;-webkit-text-stroke:0.350px #000;left:1694.2px;">Смешанная (F9)</div>
<svg class="xb" viewBox="0 0 16 16" style="left:1672px;top:679px"><rect x="0.950" y="0.950" width="14.100" height="14.100" rx="1.700" fill="#f7f7f7" stroke="#575757" stroke-width="1.850"/><path d="M5.400 5.400l5.200 5.200M10.600 5.400l-5.200 5.200" stroke="#111" stroke-width="1.250" fill="none"/></svg>
<div class="t" style="top:676px;line-height:26px;height:26px;font-size:21px;font-weight:700;letter-spacing:0.71px;transform:scaleY(1.04) rotate(0.03deg);transform-origin:0 20.3px;-webkit-text-stroke:0.350px #000;left:1692.1px;">Карточкой (F10)</div>
<svg class="xb" viewBox="0 0 16 16" style="left:1664px;top:719px"><rect x="0.950" y="0.950" width="14.100" height="14.100" rx="1.700" fill="#f7f7f7" stroke="#575757" stroke-width="1.850"/><path d="M5.400 5.400l5.200 5.200M10.600 5.400l-5.200 5.200" stroke="#111" stroke-width="1.250" fill="none"/></svg>
<div class="t" style="top:716px;line-height:26px;height:26px;font-size:21px;font-weight:700;letter-spacing:0.72px;transform:scaleY(1.04) rotate(0.03deg);transform-origin:0 20.3px;-webkit-text-stroke:0.350px #000;left:1684.5px;">Наличными (F11)</div>
<svg class="xb" viewBox="0 0 16 16" style="left:1652px;top:759px"><rect x="0.950" y="0.950" width="14.100" height="14.100" rx="1.700" fill="#f7f7f7" stroke="#575757" stroke-width="1.850"/><path d="M5.400 5.400l5.200 5.200M10.600 5.400l-5.200 5.200" stroke="#111" stroke-width="1.250" fill="none"/></svg>
<div class="t" style="top:756px;line-height:26px;height:26px;font-size:21px;font-weight:700;letter-spacing:0.32px;transform:scaleY(1.04) rotate(0.03deg);transform-origin:0 20.3px;-webkit-text-stroke:0.350px #000;left:1672.6px;">Обнулить (shift F11)</div>
<div class="fs" style="left:1633px;top:797px;width:273px;height:218px;"></div>
<div class="lg" style="left:1637px;top:791px;padding-left:15.500px">Итого</div>
<svg class="a" style="left:1639px;top:793px" width="10" height="10" viewBox="0 0 10 10"><circle cx="5.400" cy="4.500" r="4.050" fill="none" stroke="#a3a3a3" stroke-width="0.900"/><path d="M3 4.500H7.800" stroke="#a3a3a3" stroke-width="1"/></svg>
<div class="t" style="top:810px;line-height:14px;height:14px;letter-spacing:0.11px;left:1569.0px;width:400px;text-align:center;">Оплачено бонусами</div>
<div class="inp" style="left:1637px;top:824px;width:265px;height:49px;"></div>
<div class="t" style="top:879px;line-height:14px;height:14px;letter-spacing:0.11px;left:1569.5px;width:400px;text-align:center;">Сумма скидки</div>
<div class="inp" style="left:1637px;top:893px;width:265px;height:49px;"></div>
<div class="tri" style="left:1897px;top:937px"></div>
<div class="t" style="top:948px;line-height:14px;height:14px;letter-spacing:0.01px;left:1569.0px;width:400px;text-align:center;">Сумма чека</div>
<div class="inp" style="left:1637px;top:962px;width:265px;height:49px;"></div>
<div class="btn" style="left:385px;top:948px;width:308px;height:65px;border-color:#c9c9c9"></div>
<svg class="a" style="left:532px;top:973px" width="14" height="14" viewBox="0 0 14 14"><path d="M1.800 5.300Q3.500 1.700 7.500 1.900 10 2.200 11.200 4.300" fill="none" stroke="#1a1a1a" stroke-width="1.300"/><path d="M12.400 1.200 12.700 5.800H8.200z" fill="#1a1a1a"/><path d="M1.200 8.100H5.900L1.200 13z" fill="#2fb9ee"/><path d="M3.400 10.400Q5 12.300 7.500 12.300 10.800 12 12.100 8.600" fill="none" stroke="#2fb9ee" stroke-width="1.300"/></svg>
<div class="fs" style="left:696px;top:952px;width:316px;height:63px;"></div>
<div class="lg" style="left:700px;top:946px;padding-left:15.500px">Текущие значения</div>
<svg class="a" style="left:702px;top:948px" width="10" height="10" viewBox="0 0 10 10"><circle cx="5.400" cy="4.500" r="4.050" fill="none" stroke="#a3a3a3" stroke-width="0.900"/><path d="M3 4.500H7.800" stroke="#a3a3a3" stroke-width="1"/></svg>
<div class="t" style="top:968px;line-height:14px;height:14px;letter-spacing:0.24px;left:700.2px;">Компьютер</div>
<div class="inp" style="left:768px;top:963px;width:240px;height:22px;"></div>
<div class="t" style="top:968px;line-height:14px;height:14px;letter-spacing:-0.23px;left:772.3px;">BratkoSuper</div>
<div class="t" style="top:994px;line-height:14px;height:14px;letter-spacing:-0.38px;left:700.2px;">Время</div>
<div class="inp" style="left:739px;top:989px;width:80px;height:22px;"></div>
<div class="t" style="top:994px;line-height:14px;height:14px;font-size:11.5px;letter-spacing:-0.4px;left:742.6px;">22.03.24 12:23</div>
<div class="t" style="top:994px;line-height:14px;height:14px;letter-spacing:-0.06px;left:823px;">Пользователь</div>
<div class="inp" style="left:904px;top:989px;width:104px;height:22px;"></div>
<div class="t" style="top:994px;line-height:14px;height:14px;letter-spacing:0.03px;left:908.5px;">Администратор</div>
<div class="fs" style="left:1014px;top:952px;width:617px;height:63px;"></div>
<div class="lg" style="left:1018px;top:946px;padding-left:15.500px">Действия с кассой</div>
<svg class="a" style="left:1020px;top:948px" width="10" height="10" viewBox="0 0 10 10"><circle cx="5.400" cy="4.500" r="4.050" fill="none" stroke="#a3a3a3" stroke-width="0.900"/><path d="M3 4.500H7.800" stroke="#a3a3a3" stroke-width="1"/></svg>
<div class="t" style="top:965px;line-height:14px;height:14px;letter-spacing:-0.05px;left:1018.2px;">Отключить ФР</div>
<div class="inp" style="left:1018px;top:979px;width:81px;height:32px;"></div>
<div class="tri" style="left:1094px;top:1006px"></div>
<div class="a" style="left:1052px;top:988px;width:14px;height:14px;background:#fff;border:1px solid #b4b4b4;border-radius:2px"></div>
<div class="btn" style="left:1103px;top:963px;width:112px;height:48px;"></div>
<svg class="xb" viewBox="0 0 16 16" style="left:1118px;top:979px"><rect x="0.950" y="0.950" width="14.100" height="14.100" rx="1.700" fill="#f7f7f7" stroke="#575757" stroke-width="1.850"/><path d="M5.400 5.400l5.200 5.200M10.600 5.400l-5.200 5.200" stroke="#111" stroke-width="1.250" fill="none"/></svg>
<div class="t" style="top:981px;line-height:14px;height:14px;letter-spacing:0.08px;left:1138.2px;">Копия чека</div>
<div class="btn" style="left:1219px;top:963px;width:129px;height:48px;"></div>
<svg class="xb" viewBox="0 0 16 16" style="left:1234px;top:979px"><rect x="0.950" y="0.950" width="14.100" height="14.100" rx="1.700" fill="#f7f7f7" stroke="#575757" stroke-width="1.850"/><path d="M5.400 5.400l5.200 5.200M10.600 5.400l-5.200 5.200" stroke="#111" stroke-width="1.250" fill="none"/></svg>
<div class="t" style="top:981px;line-height:14px;height:14px;letter-spacing:0.19px;left:1254.3px;">Прогон ленты</div>
<div class="btn" style="left:1352px;top:963px;width:121px;height:48px;"></div>
<svg class="xb" viewBox="0 0 16 16" style="left:1367px;top:979px"><rect x="0.950" y="0.950" width="14.100" height="14.100" rx="1.700" fill="#f7f7f7" stroke="#575757" stroke-width="1.850"/><path d="M5.400 5.400l5.200 5.200M10.600 5.400l-5.200 5.200" stroke="#111" stroke-width="1.250" fill="none"/></svg>
<div class="t" style="top:981px;line-height:14px;height:14px;letter-spacing:-0.18px;left:1387.5px;">Отрезать чек</div>
<div class="btn" style="left:1477px;top:963px;width:150px;height:48px;"></div>
<svg class="xb" viewBox="0 0 16 16" style="left:1492px;top:979px"><rect x="0.950" y="0.950" width="14.100" height="14.100" rx="1.700" fill="#f7f7f7" stroke="#575757" stroke-width="1.850"/><path d="M5.400 5.400l5.200 5.200M10.600 5.400l-5.200 5.200" stroke="#111" stroke-width="1.250" fill="none"/></svg>
<div class="t" style="top:981px;line-height:14px;height:14px;letter-spacing:0.02px;left:1512.2px;">Наличных в кассе</div>
</div></body></html>
